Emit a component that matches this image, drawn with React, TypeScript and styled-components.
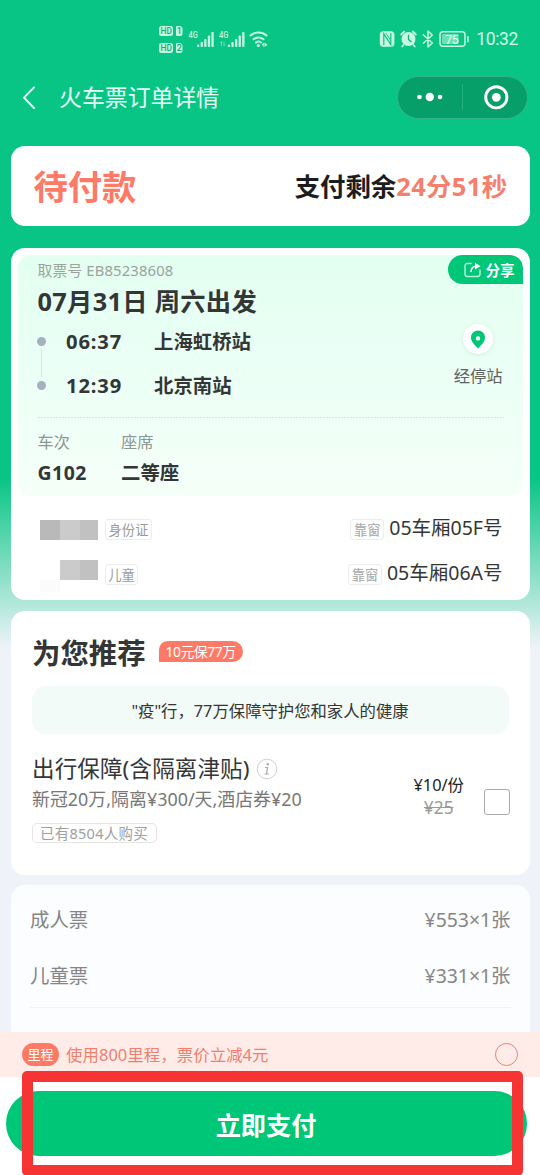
import React from "react";
import styled, { createGlobalStyle, css } from "styled-components";

const green = "#00c777";
const coral = "#ff7a66";
const ink = "#333635";

const GlobalStyle = createGlobalStyle`
  * { box-sizing: border-box; }
  body {
    margin: 0;
    font-family: "Noto Sans", "Noto Sans CJK SC", sans-serif;
    color: ${ink};
    white-space: nowrap;
  }
  svg { display: block; }
`;

const Page = styled.div`
  position: relative;
  width: 540px;
  height: 1175px;
  overflow: hidden;
  display: flex;
  flex-direction: column;
  background: linear-gradient(#08c585 0, #08c585 478px, #b0e7d9 603px, #eff3f9 648px);
`;

const StatusBar = styled.div`
  height: 76px;
  flex: none;
  display: flex;
  justify-content: space-between;
  padding: 20px 22px 0 158px;
`;

const Clock = styled.span`
  font: 17.5px/39px Roboto, sans-serif;
  letter-spacing: -0.35px;
  color: #d5fbe9;
`;

const StatusRight = styled.div`
  display: flex;
  gap: 6px;
`;

const NavBar = styled.header`
  height: 43px;
  flex: none;
  display: flex;
  align-items: center;
  padding: 0 12px 0 21px;
`;

const NavTitle = styled.h1`
  margin: 0 auto 0 22px;
  font-size: 22.9px;
  font-weight: 400;
  line-height: 30px;
  color: #e9fff6;
`;

const Capsule = styled.div`
  width: 131px;
  height: 43px;
  border-radius: 22px;
  border: 1px solid #35b389;
  background: #069f6a;
`;

const Main = styled.main`
  height: 913px;
  flex: none;
  overflow: hidden;
  padding: 27px 10.5px 0;
  display: flex;
  flex-direction: column;
`;

const Card = styled.section<{ $h: number; $gap: number; $bg?: string }>`
  height: ${(p) => p.$h}px;
  margin-bottom: ${(p) => p.$gap}px;
  flex: none;
  border-radius: 14px;
  background: ${(p) => p.$bg || "#fff"};
`;

const PayStatus = styled(Card)`
  display: flex;
  align-items: center;
  justify-content: space-between;
  padding: 2px 22px 0 23px;
`;

const PendingLabel = styled.strong`
  font-size: 34.3px;
  line-height: 44px;
  color: ${coral};
`;

const Countdown = styled.strong`
  margin-top: -2px;
  font-size: 25.4px;
  line-height: 36px;
  color: #1c1c1c;
  em { font-style: normal; color: #f57f6c; letter-spacing: 0.4px; }
`;

const TicketCard = styled(Card)`
  padding: 7px 7px 0 7.5px;
`;

const TripPanel = styled.div`
  height: 241px;
  border-radius: 13px;
  background: linear-gradient(#e3fff1 0, #e9fff5 35%, #f5fff9 100%);
  overflow: hidden;
  padding-left: 19.5px;
`;

const TripHead = styled.div`
  display: flex;
  justify-content: space-between;
  height: 31px;
`;

const PickupCode = styled.span`
  font-size: 14.8px;
  line-height: 31px;
  letter-spacing: 0.15px;
  color: #9aa39f;
`;

const ShareButton = styled.button`
  width: 75px;
  height: 29px;
  border: 0;
  padding: 0 0 0 16px;
  display: flex;
  align-items: center;
  gap: 5px;
  border-radius: 15px 13px 0 15px;
  background: ${green};
  color: #fff;
  font: 700 14.6px/28px "Noto Sans", "Noto Sans CJK SC", sans-serif;
`;

const DepartDate = styled.h2`
  margin: 0;
  font-size: 25.3px;
  line-height: 30px;
  height: 31px;
  letter-spacing: 0.3px;
`;

const Route = styled.div`
  display: flex;
  height: 100px;
  padding: 3px 20px 0 0;
`;

const RouteMark = styled.div`
  width: 9px;
  height: 53px;
  margin: 17px 20px 0 -0.5px;
  display: flex;
  flex-direction: column;
  align-items: center;
  justify-content: space-between;
  background: linear-gradient(#dbe9e5, #dbe9e5) center 12px / 1px 28px no-repeat;
  i { width: 9px; height: 9px; border-radius: 50%; background: #a6b0bf; }
`;

const StopList = styled.div`
  display: grid;
  grid-template-columns: 88px auto;
  grid-auto-rows: 43.5px;
  font-size: 19.4px;
  font-weight: 700;
  line-height: 43px;
  time { font-size: 20.2px; letter-spacing: 0.85px; }
`;

const ViaStops = styled.div`
  margin-left: auto;
  display: flex;
  flex-direction: column;
  align-items: center;
  font-size: 16.3px;
  line-height: 24px;
  color: #5e6462;
`;

const PinBadge = styled.div`
  width: 30px;
  height: 30px;
  margin: 4px 0 10px;
  display: grid;
  place-items: center;
  border-radius: 50%;
  background: #fff;
  box-shadow: 0 1px 4px rgba(0, 80, 50, 0.1);
`;

const DashRule = styled.div`
  height: 1px;
  margin-right: 19px;
  background: repeating-linear-gradient(90deg, #d6e5de 0 2px, transparent 2px 3px);
`;

const Facts = styled.dl`
  margin: 9px 0 0;
  display: grid;
  grid-template-columns: 83.500px auto;
  grid-template-rows: 31px 30px;
  dt { font-size: 16.2px; line-height: 30px; color: #8f9794; }
  dd { margin: 0; font-size: 19.4px; line-height: 30px; font-weight: 700; }
  dd:nth-of-type(1) { letter-spacing: 0.5px; }
`;

const Passenger = styled.div`
  height: 44.5px;
  display: flex;
  align-items: center;
  padding: 0 20px 0 22px;
`;

const Passengers = styled.div`
  padding-top: 10px;
`;

const MaskedName = styled.div<{ $drop?: number }>`
  margin: ${(p) => p.$drop || 0}px 7px 0 0;
`;

const Tag = styled.span<{ $w: number; $soft?: boolean }>`
  width: ${(p) => p.$w}px;
  height: 21px;
  margin-top: 3px;
  border: 1px solid #ececec;
  border-radius: 3px;
  text-align: center;
  font-size: 13.3px;
  line-height: 20px;
  color: ${(p) => (p.$soft ? "#a5a5a5" : "#9b9b9b")};
`;

const Seat = styled.span`
  margin-left: auto;
  display: flex;
  align-items: center;
  gap: 5px;
  font-size: 19.5px;
  line-height: 30px;
  b { font-weight: 400; }
`;

const OfferCard = styled(Card)`
  padding: 22px 20px 0 21.5px;
`;

const OfferHead = styled.div`
  display: flex;
  height: 53px;
  h2 { margin: 0 13px 0 0; font-size: 28.4px; line-height: 41px; }
`;

const PriceFlag = styled.span`
  height: 21px;
  width: 84px;
  margin-top: 8px;
  text-align: center;
  border-radius: 9px 11px 11px 0;
  background: ${coral};
  color: #fff;
  font-size: 13.9px;
  line-height: 21px;
  letter-spacing: -0.45px;
`;

const Banner = styled.div`
  height: 48px;
  width: 477px;
  margin-left: -0.5px;
  border-radius: 14px;
  background: #f2fbf7;
  text-align: center;
  font-size: 16.35px;
  line-height: 50px;
`;

const OfferRow = styled.div`
  display: flex;
  padding-top: 18px;
`;

const OfferText = styled.div`
  margin-right: auto;
  h3 {
    margin: 0;
    display: flex;
    align-items: center;
    gap: 6px;
    font-size: 22.5px;
    line-height: 34px;
    font-weight: 400;
    letter-spacing: 0.15px;
  }
  p {
    margin: 0 0 11px;
    font-size: 17.9px;
    line-height: 26px;
    letter-spacing: 0.02px;
    color: #777;
  }
`;

const SoldTag = styled.div`
  width: 125px;
  height: 20px;
  margin-left: -0.5px;
  border: 1px solid #e5e5e5;
  border-radius: 5px;
  text-align: center;
  font-size: 14.5px;
  letter-spacing: 0.25px;
  line-height: 19px;
  color: #a0a0a0;
`;

const OfferPrice = styled.div`
  padding-top: 21px;
  text-align: center;
  font-size: 16.4px;
  line-height: 23px;
  color: #222;
  s { display: block; color: #999; font-size: 17.3px; }
`;

const CheckBox = styled.div`
  width: 26px;
  height: 26px;
  margin: 37px 0 0 19.5px;
  border: 1.5px solid #a9a9a9;
  border-radius: 3px;
`;

const FareCard = styled(Card)`
  padding: 7px 19px 0 19.5px;
`;

const FareRow = styled.div`
  display: flex;
  justify-content: space-between;
  height: 55.5px;
  font-size: 19.4px;
  line-height: 55px;
  color: #858585;
`;

const Rule = styled.hr`
  margin: 4px 0 0;
  border: 0;
  height: 1px;
  background: #f0f2f5;
`;

const MileageBar = styled.div`
  height: 45px;
  flex: none;
  display: flex;
  align-items: center;
  padding: 0 22px;
  background: #ffece9;
  font-size: 16.4px;
  line-height: 46px;
  letter-spacing: 0.08px;
  color: #ee806d;
`;

const MileageTag = styled.span`
  width: 37px;
  height: 23px;
  margin-right: 7px;
  border-radius: 12px;
  background: ${coral};
  color: #fff;
  text-align: center;
  font-size: 13px;
  line-height: 23px;
`;

const Radio = styled.span`
  width: 23px;
  height: 23px;
  margin-left: auto;
  border: 1.3px solid #ee806d;
  border-radius: 50%;
`;

const Footer = styled.footer`
  height: 98px;
  flex: none;
  padding: 14px 14px 0 6px;
  background: #fff;
`;

const PayButton = styled.button`
  width: 521px;
  height: 65px;
  border: 0;
  border-radius: 33px;
  background: ${green};
  color: #fff;
  font: 700 25.2px/65px "Noto Sans", "Noto Sans CJK SC", sans-serif;
  padding: 2px 1px 0 0;
`;

/* Highlight drawn over the pay button and the edges around it. */
const Highlight = styled.div`
  position: absolute;
  left: 21.5px;
  top: 1070.5px;
  width: 501.5px;
  height: 105px;
  border: 11px solid #f63434;
  border-radius: 5px;
`;

const labelFont = css`
  font-family: Roboto, sans-serif;
  font-weight: 500;
`;

const StatusText = styled.text`
  ${labelFont}
`;

const pale = "#c6f7e1";

const Bars = ({ x }: { x: number }) => (
  <g fill={pale}>
    {[2.5, 5, 8, 11.5, 15].map((h, i) => (
      <rect key={i} x={x + i * 3.6} y={27 - h} width="2.3" height={h} rx=".8" />
    ))}
  </g>
);

const HdBadge = ({ y, n }: { y: number; n: string }) => (
  <g>
    <rect x="1" y={y} width="14" height="10" rx="2.5" fill={pale} />
    <path d={`M19 ${y}h3.5l2 2v5.500a2.500 2.500 0 0 1-2.500 2.500h-3a1 1 0 0 1-1-1v-8a1 1 0 0 1 1-1z`} fill={pale} />
    <StatusText x="2.4" y={y + 8.200} fontSize="9" textLength="11.500" lengthAdjust="spacingAndGlyphs" fill="#08b47a">HD</StatusText>
    <StatusText x="18.800" y={y + 8.200} fontSize="9" fill="#08b47a">{n}</StatusText>
  </g>
);

const SignalIcons = () => (
  <svg width="112" height="38" viewBox="0 0 112 38">
    <HdBadge y={6} n="1" />
    <HdBadge y={23} n="2" />
    <StatusText x="30.500" y="18" fontSize="9.800" textLength="9.300" lengthAdjust="spacingAndGlyphs" fill={pale}>4G</StatusText>
    <Bars x={39} />
    <StatusText x="61" y="18" fontSize="9.800" textLength="9.300" lengthAdjust="spacingAndGlyphs" fill={pale}>4G</StatusText>
    <path d="M63.500 26v-4.500l-1.500 1.500M66 21.500v4.500l1.500-1.500" stroke="#6adcb4" strokeWidth="1" fill="none" />
    <Bars x={69.800} />
    <g fill="none" stroke={pale} strokeWidth="2" strokeLinecap="round">
      <path d="M92.500 15.500a12 12 0 0 1 16 0M95.500 19.300a7.500 7.500 0 0 1 10 0M98 22.500a4 4 0 0 1 5 0" />
    </g>
    <circle cx="100.300" cy="25.500" r="1.600" fill={pale} />
    <path d="M103.800 24.500l2-2v4.500zM106.500 22.500v4.500l3-2.200z" fill={pale} />
  </svg>
);

const DeviceIcons = () => (
  <svg width="92" height="38" viewBox="0 0 92 38">
    <rect x="1.800" y="11.200" width="14.600" height="15.600" rx="3.500" fill={pale} />
    <path d="M5.800 25V13.800l7 10.700V13" fill="none" stroke="#08c585" strokeWidth="1.200" />
    <path d="M7.800 13l5 7.500" fill="none" stroke="#08c585" strokeWidth=".9" />
    <circle cx="30.500" cy="19" r="7" fill={pale} />
    <path d="M23.200 14.500l3-3M37.800 14.500l-3-3M25.500 25l-1.300 1.500M35.500 25l1.300 1.500" stroke={pale} strokeWidth="1.800" strokeLinecap="round" />
    <path d="M30.500 14.800V19.500l3 2.500" fill="none" stroke="#08b47a" strokeWidth="1.300" />
    <path d="M45.300 14.800l9 8.200-4.300 4V11l4.300 4-9 8.200" fill="none" stroke={pale} strokeWidth="1.500" strokeLinejoin="round" strokeLinecap="round" />
    <rect x="62" y="11.800" width="25" height="14.500" rx="3" fill="none" stroke={pale} strokeWidth="1.500" />
    <rect x="64" y="14" width="16.500" height="10" rx="1" fill="#6be0b6" />
    <rect x="89" y="16" width="1.700" height="6.500" rx=".8" fill={pale} />
    <text x="67.300" y="23.700" fontSize="12.500" fontFamily="Roboto, sans-serif" fill="#e3fff3" textLength="13.500">75</text>
  </svg>
);

const BackIcon = () => (
  <svg width="16" height="24" viewBox="0 0 16 24">
    <path d="M13 1.400L3 11.600l10 10.400" fill="none" stroke="#e9fff6" strokeWidth="2" strokeLinecap="round" strokeLinejoin="round" />
  </svg>
);

const CapsuleIcons = () => (
  <svg width="129" height="41" viewBox="0 0 129 41">
    <circle cx="21.500" cy="20" r="2.300" fill="#fff" />
    <circle cx="31.800" cy="20" r="4.200" fill="#fff" />
    <circle cx="42" cy="20" r="2.300" fill="#fff" />
    <path d="M64.500 7v26" stroke="#24ae81" strokeWidth="1" />
    <circle cx="98.300" cy="20.300" r="10.600" fill="none" stroke="#fff" strokeWidth="2.900" />
    <circle cx="98.300" cy="20.300" r="4.400" fill="#fff" />
  </svg>
);

const ShareIcon = () => (
  <svg width="17" height="16" viewBox="0 0 17 16">
    <path d="M7 1.500H3.500Q1 1.500 1 4v8Q1 14.500 3.500 14.500h10Q16 14.500 16 12V8" fill="none" stroke="#bff1dc" strokeWidth="1.400" strokeLinecap="round" />
    <path d="M7 9.500Q7.500 4.500 12 4.300" fill="none" stroke="#fff" strokeWidth="1.600" strokeLinecap="round" />
    <path d="M11 .8L16.500 4.300 11 7.500z" fill="#fff" />
  </svg>
);

const PinIcon = () => (
  <svg width="16" height="19" viewBox="0 0 16 19">
    <path fillRule="evenodd" d="M8 .5a7 7 0 0 0-7 7c0 4.500 4.600 8.500 7 11 2.400-2.500 7-6.500 7-11a7 7 0 0 0-7-7zm0 5.700a2.200 2.200 0 1 1 0 4.400 2.200 2.200 0 0 1 0-4.400z" fill={green} />
  </svg>
);

const InfoIcon = () => (
  <svg width="22" height="22" viewBox="0 0 22 22">
    <circle cx="11" cy="11" r="9.800" fill="none" stroke="#d0d0d0" strokeWidth="1" />
    <circle cx="11.800" cy="6.300" r="1.200" fill="#aaa" />
    <path d="M9 9.500h2.600l-1.100 6.300M8.600 16h4.300" fill="none" stroke="#aaa" strokeWidth="1.200" />
  </svg>
);

const MaskA = () => (
  <svg width="58" height="20" viewBox="0 0 58 20">
    <rect width="20" height="20" fill="#b9b9b9" />
    <rect x="20" width="20" height="20" fill="#cbcbcb" />
    <rect x="40" width="18" height="20" fill="#c1c1c1" />
  </svg>
);

const MaskB = () => (
  <svg width="58" height="32" viewBox="0 0 58 32">
    <rect x="20" width="20" height="20" fill="#cbcbcb" />
    <rect x="40" width="18" height="20" fill="#c1c1c1" />
    <rect y="20" width="20" height="12" fill="#fbfbfb" />
  </svg>
);

export default function App() {
  return (
    <Page>
      <GlobalStyle />
      <StatusBar>
        <SignalIcons />
        <StatusRight>
          <DeviceIcons />
          <Clock>10:32</Clock>
        </StatusRight>
      </StatusBar>
      <NavBar>
        <BackIcon />
        <NavTitle>火车票订单详情</NavTitle>
        <Capsule><CapsuleIcons /></Capsule>
      </NavBar>
      <Main>
        <PayStatus $h={80} $gap={22}>
          <PendingLabel>待付款</PendingLabel>
          <Countdown>支付剩余<em>24分51秒</em></Countdown>
        </PayStatus>
        <TicketCard $h={352} $gap={11}>
          <TripPanel>
            <TripHead>
              <PickupCode>取票号 EB85238608</PickupCode>
              <ShareButton><ShareIcon />分享</ShareButton>
            </TripHead>
            <DepartDate>07月31日 周六出发</DepartDate>
            <Route>
              <RouteMark><i /><i /></RouteMark>
              <StopList>
                <time>06:37</time><span>上海虹桥站</span>
                <time>12:39</time><span>北京南站</span>
              </StopList>
              <ViaStops>
                <PinBadge><PinIcon /></PinBadge>
                经停站
              </ViaStops>
            </Route>
            <DashRule />
            <Facts>
              <dt>车次</dt><dt>座席</dt>
              <dd>G102</dd><dd>二等座</dd>
            </Facts>
          </TripPanel>
          <Passengers>
            <Passenger>
              <MaskedName $drop={4}><MaskA /></MaskedName>
              <Tag $w={47}>身份证</Tag>
              <Seat><Tag $w={34} $soft>靠窗</Tag><b>05车厢05F号</b></Seat>
            </Passenger>
            <Passenger>
              <MaskedName $drop={6}><MaskB /></MaskedName>
              <Tag $w={33}>儿童</Tag>
              <Seat><Tag $w={34} $soft>靠窗</Tag><b>05车厢06A号</b></Seat>
            </Passenger>
          </Passengers>
        </TicketCard>
        <OfferCard $h={264} $gap={10}>
          <OfferHead>
            <h2>为您推荐</h2>
            <PriceFlag>10元保77万</PriceFlag>
          </OfferHead>
          <Banner>"疫"行，77万保障守护您和家人的健康</Banner>
          <OfferRow>
            <OfferText>
              <h3>出行保障(含隔离津贴)<InfoIcon /></h3>
              <p>新冠20万,隔离¥300/天,酒店券¥20</p>
              <SoldTag>已有8504人购买</SoldTag>
            </OfferText>
            <OfferPrice>¥10/份<s>¥25</s></OfferPrice>
            <CheckBox />
          </OfferRow>
        </OfferCard>
        <FareCard $h={160} $gap={0} $bg="#fcfdff">
          <FareRow><span>成人票</span><span>¥553×1张</span></FareRow>
          <FareRow><span>儿童票</span><span>¥331×1张</span></FareRow>
          <Rule />
        </FareCard>
      </Main>
      <MileageBar>
        <MileageTag>里程</MileageTag>
        使用800里程，票价立减4元
        <Radio />
      </MileageBar>
      <Footer>
        <PayButton>立即支付</PayButton>
      </Footer>
      <Highlight />
    </Page>
  );
}
